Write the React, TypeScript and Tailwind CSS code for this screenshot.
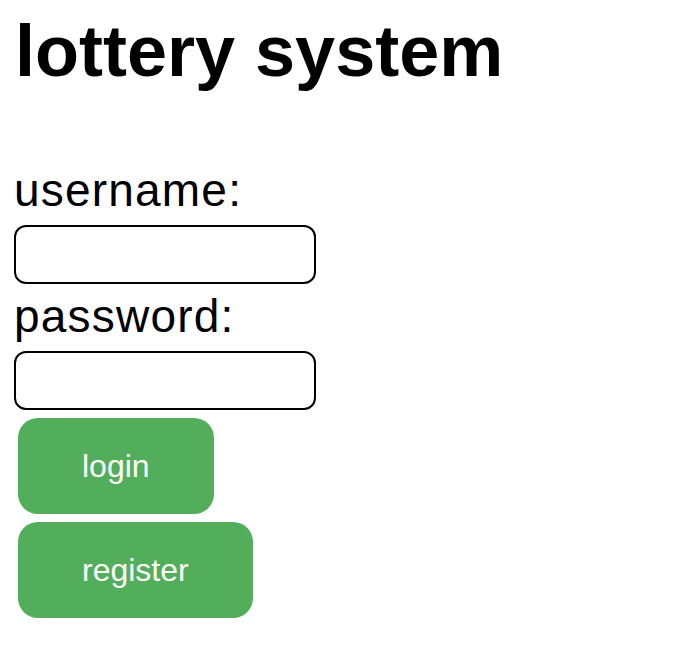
import React from "react"

export default function App() {
  return (
    <div className="min-h-[664px] w-[682px] bg-white px-[14px] pt-[15px] font-['Liberation_Sans',Arial,sans-serif] text-black">
      <h1 className="ml-[1px] text-[72px] font-bold leading-none">lottery system</h1>

      <form className="mt-[80px] flex flex-col items-start" onSubmit={(e) => e.preventDefault()}>
        <label htmlFor="username" className="text-[46px] leading-none tracking-[1.2px]">
          username:
        </label>
        <input
          id="username"
          type="text"
          className="mt-[12px] h-[59px] w-[302px] rounded-[12px] border-2 border-black px-3 text-[28px] outline-none"
        />

        <label htmlFor="password" className="mt-[9px] text-[46px] leading-none tracking-[1.2px]">
          password:
        </label>
        <input
          id="password"
          type="password"
          className="mt-[12px] h-[59px] w-[302px] rounded-[12px] border-2 border-black px-3 text-[28px] outline-none"
        />

        <button
          type="submit"
          className="ml-[4px] mt-[8px] flex h-[96px] items-center rounded-[20px] bg-[#52ae5a] px-[64px] text-[32px] leading-none text-white"
        >
          login
        </button>
        <button
          type="button"
          className="ml-[4px] mt-[8px] flex h-[96px] items-center rounded-[20px] bg-[#52ae5a] px-[64px] text-[32px] leading-none text-white"
        >
          register
        </button>
      </form>
    </div>
  )
}
